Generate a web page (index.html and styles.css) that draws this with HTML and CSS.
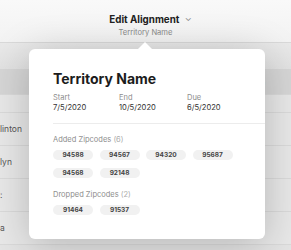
FILE: index.html
```html
<!DOCTYPE html>
<html lang="en">

<head>
    <meta charset="UTF-8">
    <meta name="viewport" content="width=device-width, initial-scale=1.0">
    <title>Edit Alignment</title>
    <link rel="stylesheet" href="styles.css">
</head>

<body>
    <div class="header">
        <div class="title">Edit Alignment <span class="chevron">&#8964;</span></div>
        <div class="subtitle">Territory Name</div>
    </div>
    <div class="list">
        <div class="toolbar"></div>
        <div class="row selected"><span></span><span class="link">ta</span></div>
        <div class="row short"></div>
        <div class="row"><span>linton</span></div>
        <div class="row"><span>lyn</span></div>
        <div class="row"><span>:</span></div>
        <div class="row"><span>a</span></div>
    </div>

    <div class="popover">
        <h1>Territory Name</h1>
        <div class="dates">
            <div class="date">
                <div class="label">Start</div>
                <div class="value">7/5/2020</div>
            </div>
            <div class="date">
                <div class="label">End</div>
                <div class="value">10/5/2020</div>
            </div>
            <div class="date">
                <div class="label">Due</div>
                <div class="value">6/5/2020</div>
            </div>
        </div>
        <div class="section">
            <div class="section-title">Added Zipcodes <span class="count">(6)</span></div>
            <div class="chips">
                <span class="chip">94588</span>
                <span class="chip">94567</span>
                <span class="chip">94320</span>
                <span class="chip">95687</span>
                <span class="chip">94568</span>
                <span class="chip">92148</span>
            </div>
        </div>
        <div class="section">
            <div class="section-title">Dropped Zipcodes <span class="count">(2)</span></div>
            <div class="chips">
                <span class="chip">91464</span>
                <span class="chip">91537</span>
            </div>
        </div>
    </div>
</body>

</html>
```

FILE: styles.css
```css
body {
    font-family: Inter, "Noto Sans", sans-serif;
    margin: 0;
    padding: 0;
    width: 291px;
    height: 250px;
    overflow: hidden;
    background: #e4e4e4;
    position: relative;
}

.header {
    height: 43px;
    box-sizing: border-box;
    padding-top: 14px;
    text-align: center;
    background: linear-gradient(#f9f9f9, #f3f3f3);
    border-bottom: 1px solid #d9d9d9;
}

.title {
    font-size: 9.8px;
    font-weight: 700;
    color: #222;
    padding-left: 10px;
    line-height: 12px;
}

.chevron {
    font-weight: 400;
    color: #888;
    font-size: 9px;
    margin-left: 3px;
    position: relative;
    top: -2px;
}

.subtitle {
    font-size: 7.6px;
    color: #8a8a8a;
    line-height: 10px;
    margin-top: 2px;
}

.list {
    display: flex;
    flex-direction: column;
}

.toolbar {
    height: 26px;
    background: linear-gradient(#e9e9e9, #e2e2e2);
}

.row {
    height: 33px;
    display: flex;
    align-items: center;
    justify-content: space-between;
    border-bottom: 1px solid #dadada;
    background: #e8e8e8;
    font-size: 8.5px;
    color: #555;
    box-sizing: border-box;
}

.row.selected {
    height: 26px;
    background: #d6d6d6;
}

.row.short {
    height: 18px;
}

.link {
    color: #3b5f9a;
    font-weight: 700;
    margin-right: 26px;
}

.popover {
    position: absolute;
    left: 29px;
    top: 49px;
    width: 236px;
    height: 190px;
    box-sizing: border-box;
    padding: 21px 0 0 24px;
    background: #fff;
    border-radius: 6px;
    box-shadow: 0 6px 40px rgba(0, 0, 0, 0.22);
}

.popover::before {
    content: "";
    position: absolute;
    left: 108px;
    top: -7px;
    border-left: 8px solid transparent;
    border-right: 8px solid transparent;
    border-bottom: 8px solid #fff;
}

h1 {
    margin: 0;
    font-size: 14px;
    font-weight: 700;
    color: #1c1c1c;
    line-height: 18px;
}

.dates {
    display: flex;
    padding: 5px 0 10px;
    border-bottom: 1px solid #ececec;
}

.date {
    width: 66px;
}

.date:nth-child(2) {
    width: 68px;
}

.label {
    font-size: 7.5px;
    color: #8d8d8d;
    line-height: 10px;
}

.value {
    font-size: 7.6px;
    color: #333;
    line-height: 10px;
}

.section {
    margin-top: 11px;
}

.section + .section {
    margin-top: 12px;
}

.section-title {
    font-size: 7.5px;
    color: #8d8d8d;
    line-height: 10px;
}

.count {
    color: #aaa;
}

.chips {
    display: flex;
    flex-wrap: wrap;
    gap: 8px 6.5px;
    margin-top: 5px;
    width: 190px;
}

.chip {
    width: 40px;
    height: 10px;
    line-height: 10px;
    border-radius: 5px;
    background: #f1f1f1;
    text-align: center;
    font-size: 6.5px;
    font-weight: 700;
    color: #444;
}
```
